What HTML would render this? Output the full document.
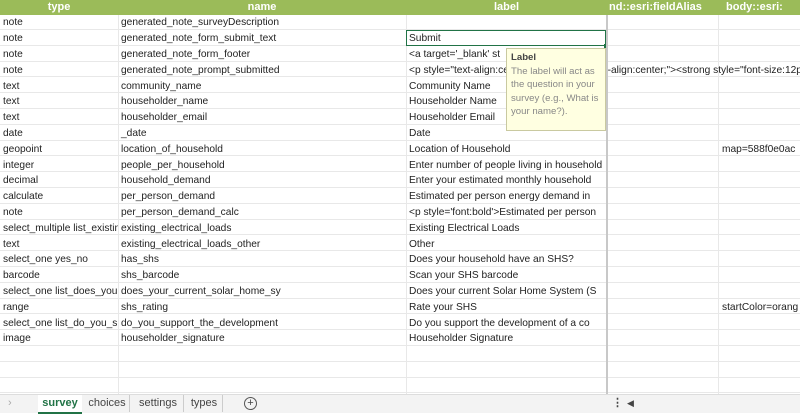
<!DOCTYPE html>
<html><head><style>
body{margin:0;width:800px;height:412px;overflow:hidden;background:#fff;font-family:"Liberation Sans",sans-serif;position:relative}
.hdr{position:absolute;top:0;left:0;width:800px;height:15px;background:#9bbb59}
.h{position:absolute;top:0;height:15px;line-height:15px;color:#fff;font-weight:bold;font-size:11px;text-align:center;overflow:hidden;white-space:nowrap}
.r{position:absolute;left:0;width:800px;height:15.8px;border-bottom:1px solid #e8e8e8;box-sizing:border-box;font-size:10.2px;color:#222;line-height:17px}
.c{position:absolute;top:0;height:15px;white-space:nowrap;overflow:hidden;padding-left:3px;box-sizing:border-box}
.v{position:absolute;top:15px;width:1px;height:380px;background:#e8e8e8}
.tabs{position:absolute;left:0;top:394px;width:800px;height:18px;background:#f3f3f3;border-top:1px solid #ddd;font-size:11px;color:#444}
.t{position:absolute;top:0;height:17px;line-height:17px}
</style></head><body>
<div class="hdr"></div>
<div class="h" style="left:0;width:118px">type</div>
<div class="h" style="left:118px;width:288px">name</div>
<div class="h" style="left:406px;width:201px">label</div>
<div class="h" style="left:607px;width:111px;text-align:left;padding-left:2px">nd::esri:fieldAlias</div>
<div class="h" style="left:718px;width:82px;text-align:left;padding-left:8px">body::esri:</div>
<div class="v" style="left:118px"></div>
<div class="v" style="left:406px"></div>
<div class="v" style="left:718px"></div>
<div id="rows"></div>
<script>
var d=[["note","generated_note_surveyDescription","",""],["note","generated_note_form_submit_text","Submit",""],["note","generated_note_form_footer","<a target='_blank' st",""],["note","generated_note_prompt_submitted","<p style=\"text-align:center;\"><div style=\"text-align:center;\"><strong style=\"font-size:12pt\">","X"],["text","community_name","Community Name",""],["text","householder_name","Householder Name",""],["text","householder_email","Householder Email",""],["date","_date","Date",""],["geopoint","location_of_household","Location of Household","map=588f0e0ac"],["integer","people_per_household","Enter number of people living in household",""],["decimal","household_demand","Enter your estimated monthly household",""],["calculate","per_person_demand","Estimated per person energy demand in",""],["note","per_person_demand_calc","<p style='font:bold'>Estimated per person",""],["select_multiple list_existing","existing_electrical_loads","Existing Electrical Loads",""],["text","existing_electrical_loads_other","Other",""],["select_one yes_no","has_shs","Does your household have an SHS?",""],["barcode","shs_barcode","Scan your SHS barcode",""],["select_one list_does_your","does_your_current_solar_home_sy","Does your current Solar Home System (S",""],["range","shs_rating","Rate your SHS","startColor=orang"],["select_one list_do_you_support","do_you_support_the_development","Do you support the development of a co",""],["image","householder_signature","Householder Signature",""],["","","",""],["","","",""],["","","",""]];
var h="";
d.forEach(function(r,i){var top=14.3+i*15.8;var e=function(s){return s.replace(/&/g,"&amp;").replace(/</g,"&lt;")};
var lab=r[3]=="X"?'<div class="c" style="left:406px;width:394px">'+e(r[2])+'</div>':'<div class="c" style="left:406px;width:201px">'+e(r[2])+'</div>';
h+='<div class="r" style="top:'+top+'px"><div class="c" style="left:0;width:118px">'+e(r[0])+'</div><div class="c" style="left:118px;width:288px">'+e(r[1])+'</div>'+lab+(r[3]&&r[3]!="X"?'<div class="c" style="left:718px;width:82px;padding-left:4px">'+e(r[3])+'</div>':'')+'</div>';});
document.getElementById("rows").innerHTML=h;
</script>
<div style="position:absolute;left:406px;top:30px;width:200px;height:16px;border:1px solid #217346;box-sizing:border-box"></div>
<div style="position:absolute;left:604px;top:44px;width:4px;height:4px;background:#217346"></div>
<div style="position:absolute;left:606px;top:15px;width:2px;height:380px;background:#c8c8c8"></div>
<div style="position:absolute;left:506px;top:48px;width:100px;height:83px;background:#ffffe1;border:1px solid #c9c9a0;box-sizing:border-box;font-size:9.6px;line-height:13.5px;padding:2px 4px;color:#888">
<div style="color:#444;font-weight:bold">Label</div>The label will act as the question in your survey (e.g., What is your name?).</div>
<div class="tabs">
<div class="t" style="left:8px;color:#aaa">›</div>
<div class="t" style="left:38px;width:44px;background:#fff;border-bottom:2px solid #217346;color:#217346;font-weight:bold;text-align:center">survey</div>
<div class="t" style="left:85px;width:44px;text-align:center;border-right:1px solid #ccc">choices</div>
<div class="t" style="left:133px;width:50px;text-align:center;border-right:1px solid #ccc">settings</div>
<div class="t" style="left:186px;width:36px;text-align:center;border-right:1px solid #ccc">types</div>
<div class="t" style="left:244px;top:2px;width:11px;height:11px;border:1px solid #555;border-radius:50%;text-align:center;line-height:11px;font-size:11px">+</div>
<div class="t" style="left:612px;font-weight:bold">⋮</div>
<div class="t" style="left:627px;font-size:9px">◀</div>
</div>
</body></html>
